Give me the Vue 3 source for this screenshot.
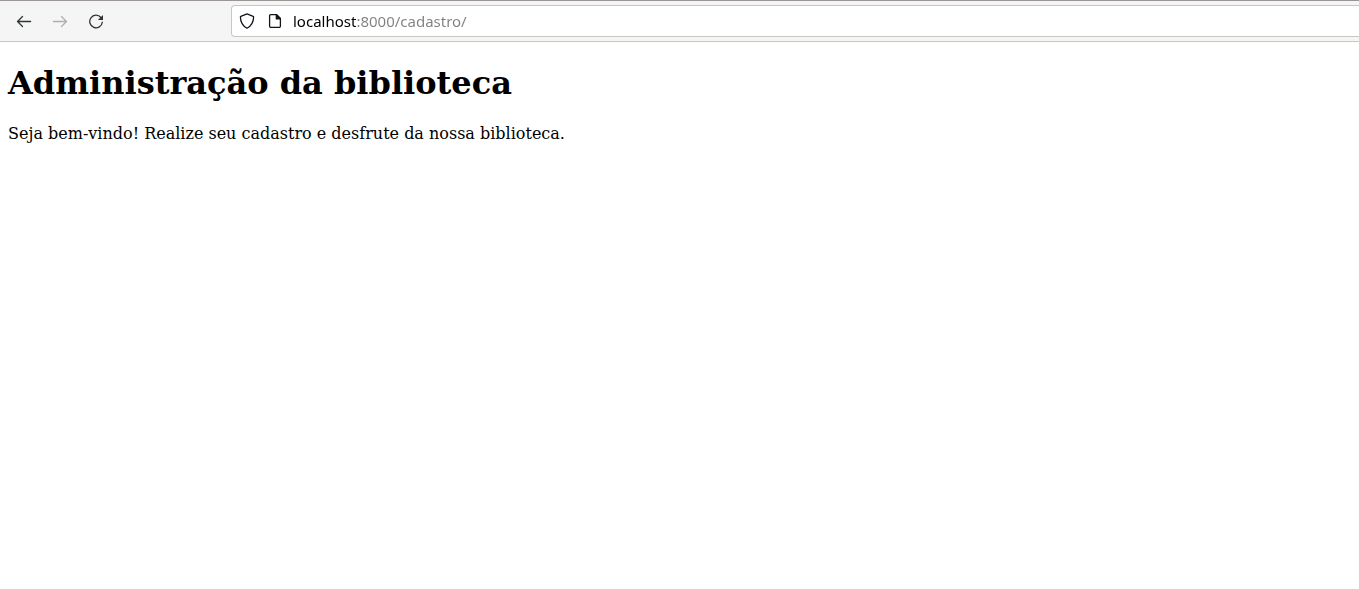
<script setup>
import { ref } from 'vue'

const address = ref('localhost:8000/cadastro/')
</script>

<template>
  <div class="browser">
    <header class="toolbar">
      <nav class="nav-buttons" aria-label="Navegação">
        <button type="button" class="tool" aria-label="Voltar">
          <svg viewBox="0 0 16 16" class="icon">
            <path d="M14.6 8.500H1.800M6.500 3.500 1.500 8.500l5 5" />
          </svg>
        </button>
        <button type="button" class="tool" aria-label="Avançar" disabled>
          <svg viewBox="0 0 16 16" class="icon">
            <path d="M1.400 8.500h12.800M9.500 3.500 14.500 8.500l-5 5" />
          </svg>
        </button>
        <button type="button" class="tool" aria-label="Recarregar">
          <svg viewBox="0 0 16 16" class="icon">
            <path d="M12.900 4.500A6.300 6.300 0 1 0 14.300 9.200" />
            <path class="solid" d="M15 2v4.600a.5.5 0 0 1-.5.5H9.900z" />
          </svg>
        </button>
      </nav>
      <form class="url-bar" @submit.prevent>
        <button type="button" class="badge" aria-label="Proteção">
          <svg viewBox="0 0 16 16" class="icon">
            <path d="M8 .9 14.2 3.300c.3.1.4.3.4.6C14.500 8.600 12.600 12.700 8 15.200 3.400 12.700 1.500 8.600 1.400 3.900c0-.3.1-.5.4-.6z" />
          </svg>
        </button>
        <button type="button" class="badge" aria-label="Informações do site">
          <svg viewBox="0 0 16 16" class="icon">
            <path d="M9.600 1.700H3.600a1 1 0 0 0-1 1v10.600a1 1 0 0 0 1 1h8.800a1 1 0 0 0 1-1V5.400z" />
            <path class="solid" d="M8.700 1.200h1.200L14 5.300V6.500H9.200a.5.5 0 0 1-.5-.5z" />
          </svg>
        </button>
        <input v-model="address" class="address" type="text" aria-label="Endereço" spellcheck="false" />
      </form>
    </header>
    <main class="page">
      <h1>Administração da biblioteca</h1>
      <p>Seja bem-vindo! Realize seu cadastro e desfrute da nossa biblioteca.</p>
    </main>
  </div>
</template>

<style>
body {
  margin: 0;
  background: #fff;
}
</style>

<style scoped>
.browser {
  min-height: 100vh;
  overflow-x: hidden;
}

.toolbar {
  display: flex;
  align-items: center;
  box-sizing: border-box;
  height: 42px;
  padding-left: 8px;
  background: #f6f5f6;
  border-top: 1px solid #9b9594;
  border-bottom: 1px solid #c9c6c3;
}

.nav-buttons {
  display: flex;
  gap: 4px;
  margin-right: 119px;
}

.tool,
.badge {
  display: flex;
  align-items: center;
  justify-content: center;
  height: 32px;
  padding: 0;
  border: 0;
  background: none;
  color: #2e3436;
}

.tool {
  width: 32px;
}

.tool:disabled {
  color: #adafb0;
}

.badge {
  width: 28px;
  color: #15141a;
}

.icon {
  width: 16px;
  height: 16px;
  fill: none;
  stroke: currentColor;
  stroke-width: 1.3;
  stroke-linecap: round;
  stroke-linejoin: round;
}

.solid {
  fill: currentColor;
  stroke: none;
}

.url-bar {
  display: flex;
  flex: 1;
  align-items: center;
  box-sizing: border-box;
  height: 32px;
  padding-left: 1px;
  background: #fff;
  border: 1px solid #c9c6c0;
  border-right: 0;
  border-radius: 4px 0 0 4px;
}

/* The host part of the address is dark, the port and path are dimmed. */
.address {
  flex: 1;
  min-width: 0;
  height: 30px;
  margin-left: 4px;
  padding: 0;
  border: 0;
  outline: 0;
  background: linear-gradient(to right, #000 63px, #808080 63px);
  background-clip: text;
  color: transparent;
  caret-color: #000;
  font: 15px "Noto Sans", sans-serif;
}

.page {
  padding: 0 8px;
  color: #000;
  font: 16px/19px "DejaVu Serif", serif;
}

h1 {
  margin: 22px 0;
  font-size: 32px;
  line-height: 38px;
}

p {
  margin: 0;
}
</style>
